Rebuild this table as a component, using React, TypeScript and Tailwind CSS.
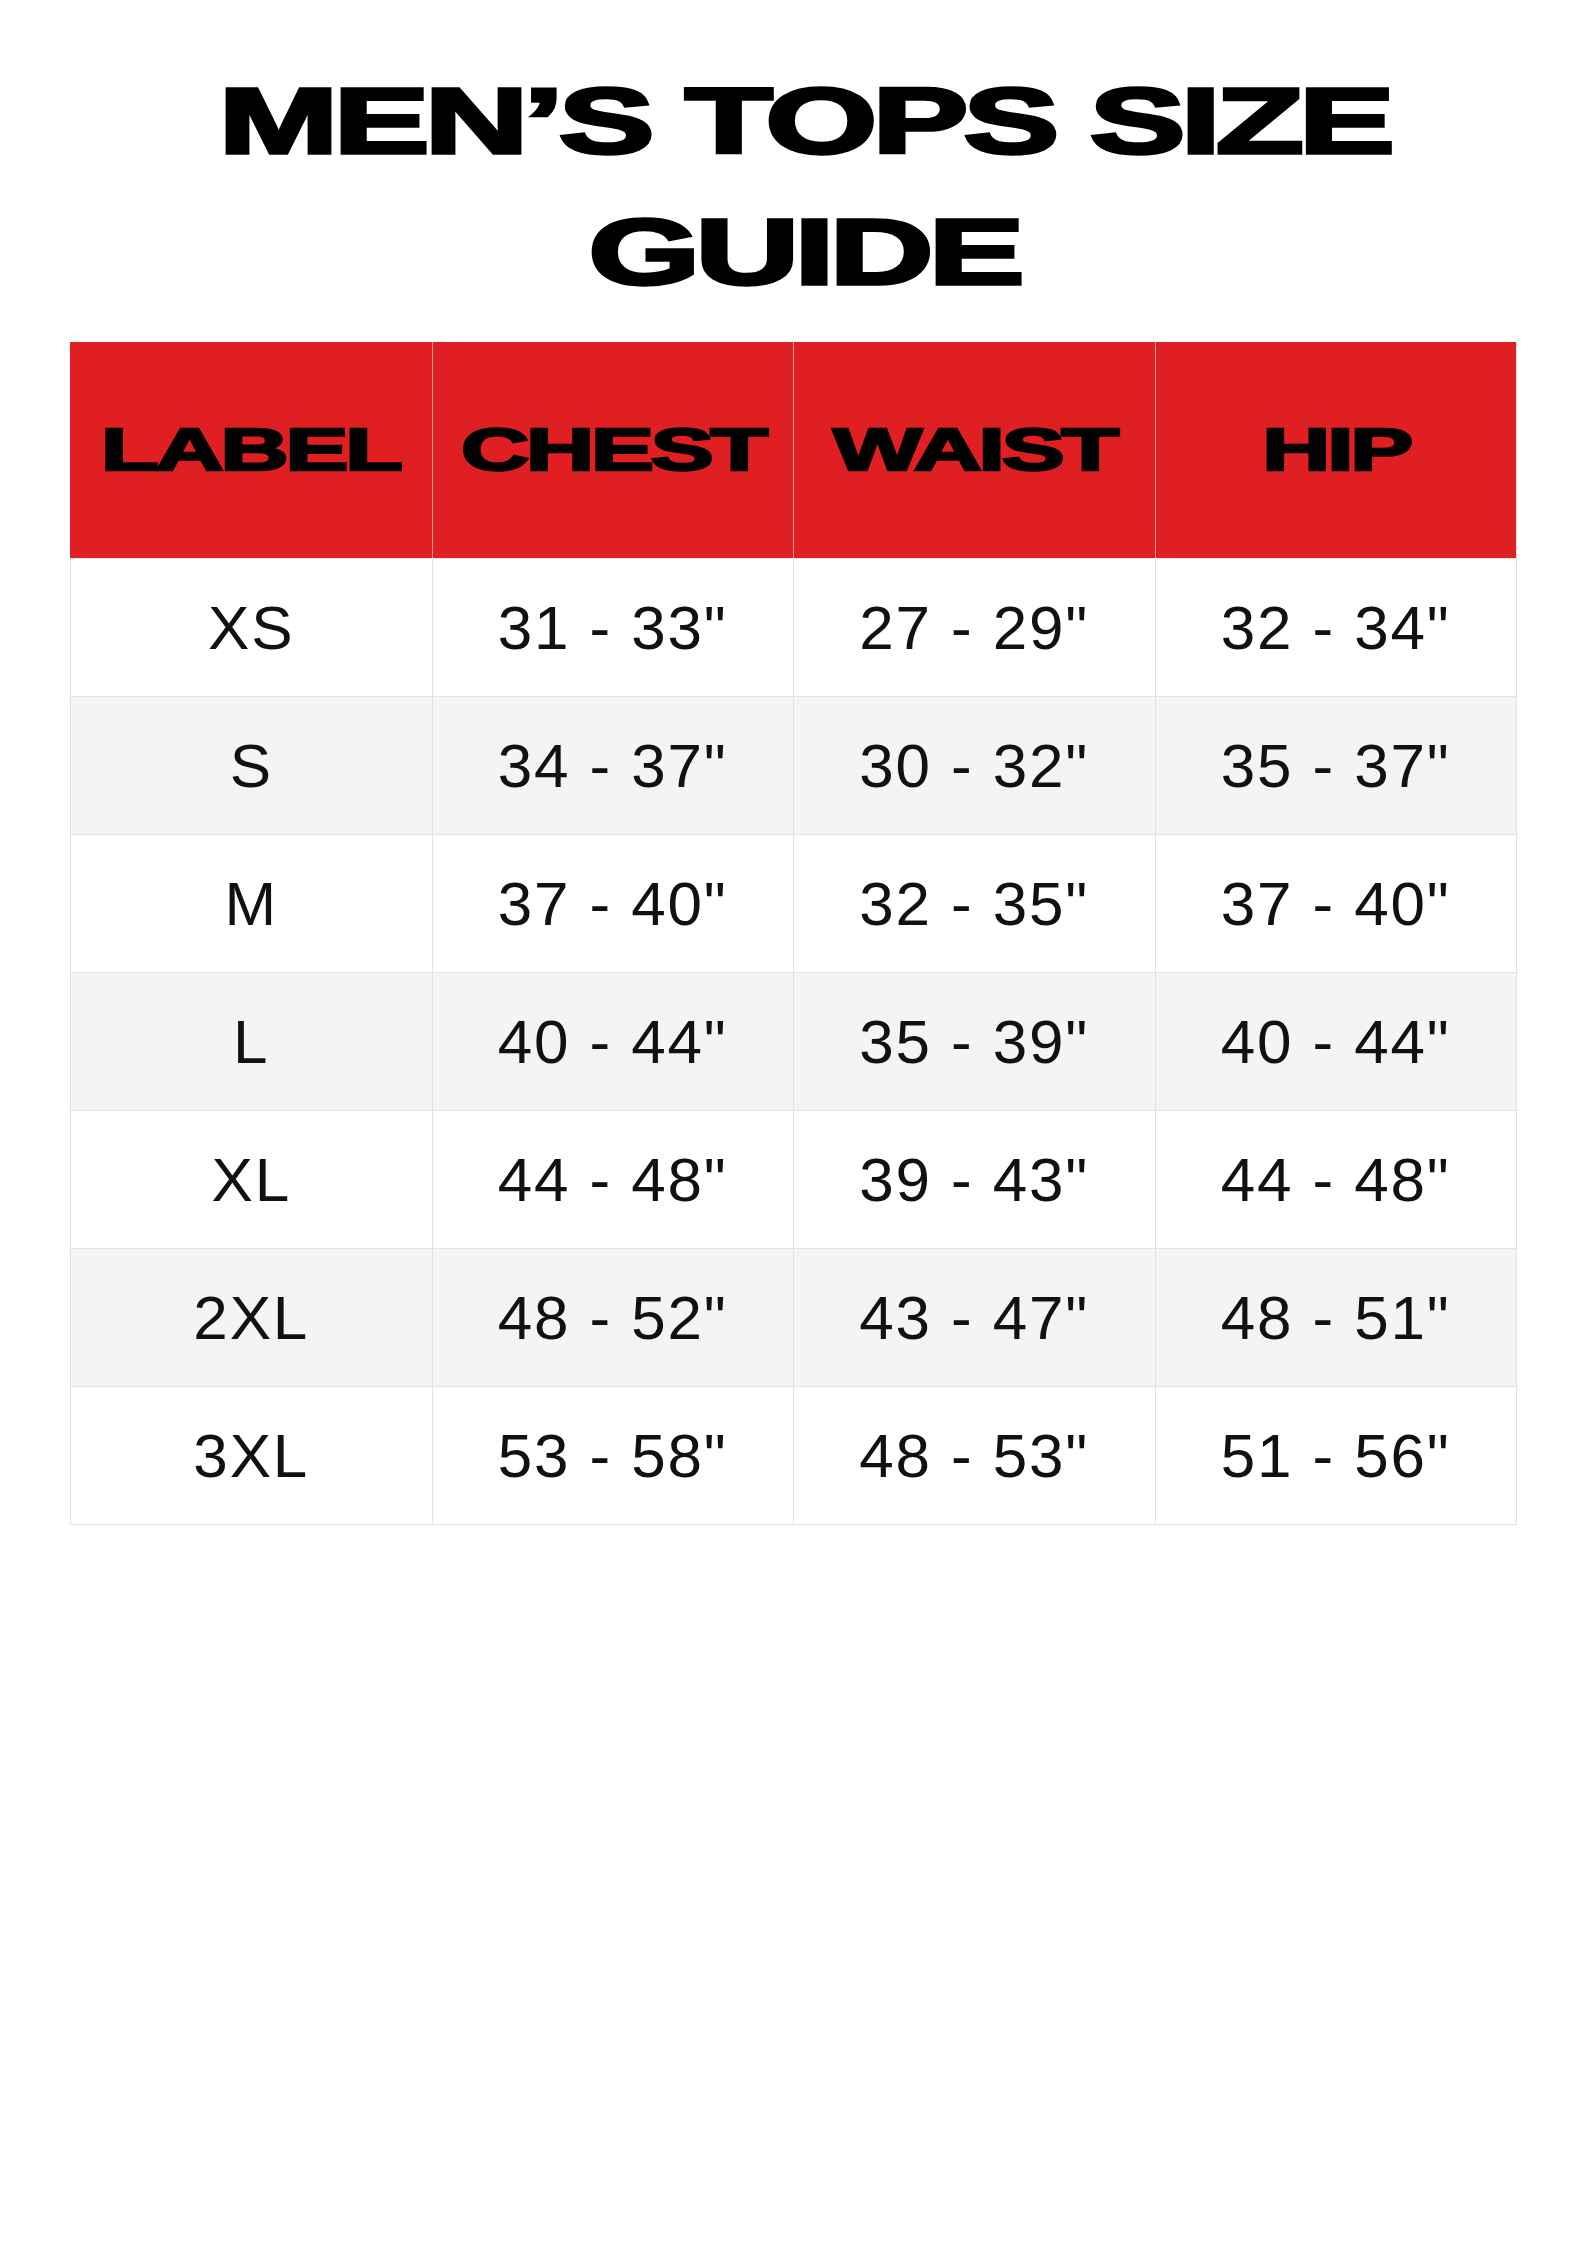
const headers = ["LABEL", "CHEST", "WAIST", "HIP"];

const rows: string[][] = [
  ["XS", '31 - 33"', '27 - 29"', '32 - 34"'],
  ["S", '34 - 37"', '30 - 32"', '35 - 37"'],
  ["M", '37 - 40"', '32 - 35"', '37 - 40"'],
  ["L", '40 - 44"', '35 - 39"', '40 - 44"'],
  ["XL", '44 - 48"', '39 - 43"', '44 - 48"'],
  ["2XL", '48 - 52"', '43 - 47"', '48 - 51"'],
  ["3XL", '53 - 58"', '48 - 53"', '51 - 56"'],
];

export default function App() {
  return (
    <div className="min-h-[2245px] w-full bg-white font-['Liberation_Sans',Arial,sans-serif] text-black">
      <h1 className="pl-[22px] pt-[56px] text-center text-[92px] font-bold leading-[131px] tracking-[-3px] [-webkit-text-stroke:3.5px_black]">
        <span className="inline-block scale-x-[1.56]">MEN’S TOPS SIZE</span>
        <br />
        <span className="inline-block scale-x-[1.56]">GUIDE</span>
      </h1>

      <div className="mx-auto mt-[24px] w-[1447px] border-b border-r border-[#e2e2e2]">
        <div className="grid h-[216px] grid-cols-4 bg-[#e01f22]">
          {headers.map((h, i) => (
            <div
              key={h}
              className={`flex items-center justify-center ${
                i > 0 ? "border-l border-[#ee9a9a]" : ""
              }`}
            >
              <span className="inline-block scale-x-[1.6] text-[59px] font-bold leading-none tracking-[-2px] [-webkit-text-stroke:2.5px_black]">
                {h}
              </span>
            </div>
          ))}
        </div>
        {rows.map((r, ri) => (
          <div
            key={r[0]}
            className={`grid h-[138px] grid-cols-4 border-t border-[#e2e2e2] ${
              ri % 2 === 1 ? "bg-[#f4f4f4]" : "bg-white"
            }`}
          >
            {r.map((c, ci) => (
              <div
                key={ci}
                className="flex items-center justify-center border-l border-[#e2e2e2] text-[62px] leading-none tracking-[0.03em] text-[#111]"
              >
                {c}
              </div>
            ))}
          </div>
        ))}
      </div>
    </div>
  );
}
